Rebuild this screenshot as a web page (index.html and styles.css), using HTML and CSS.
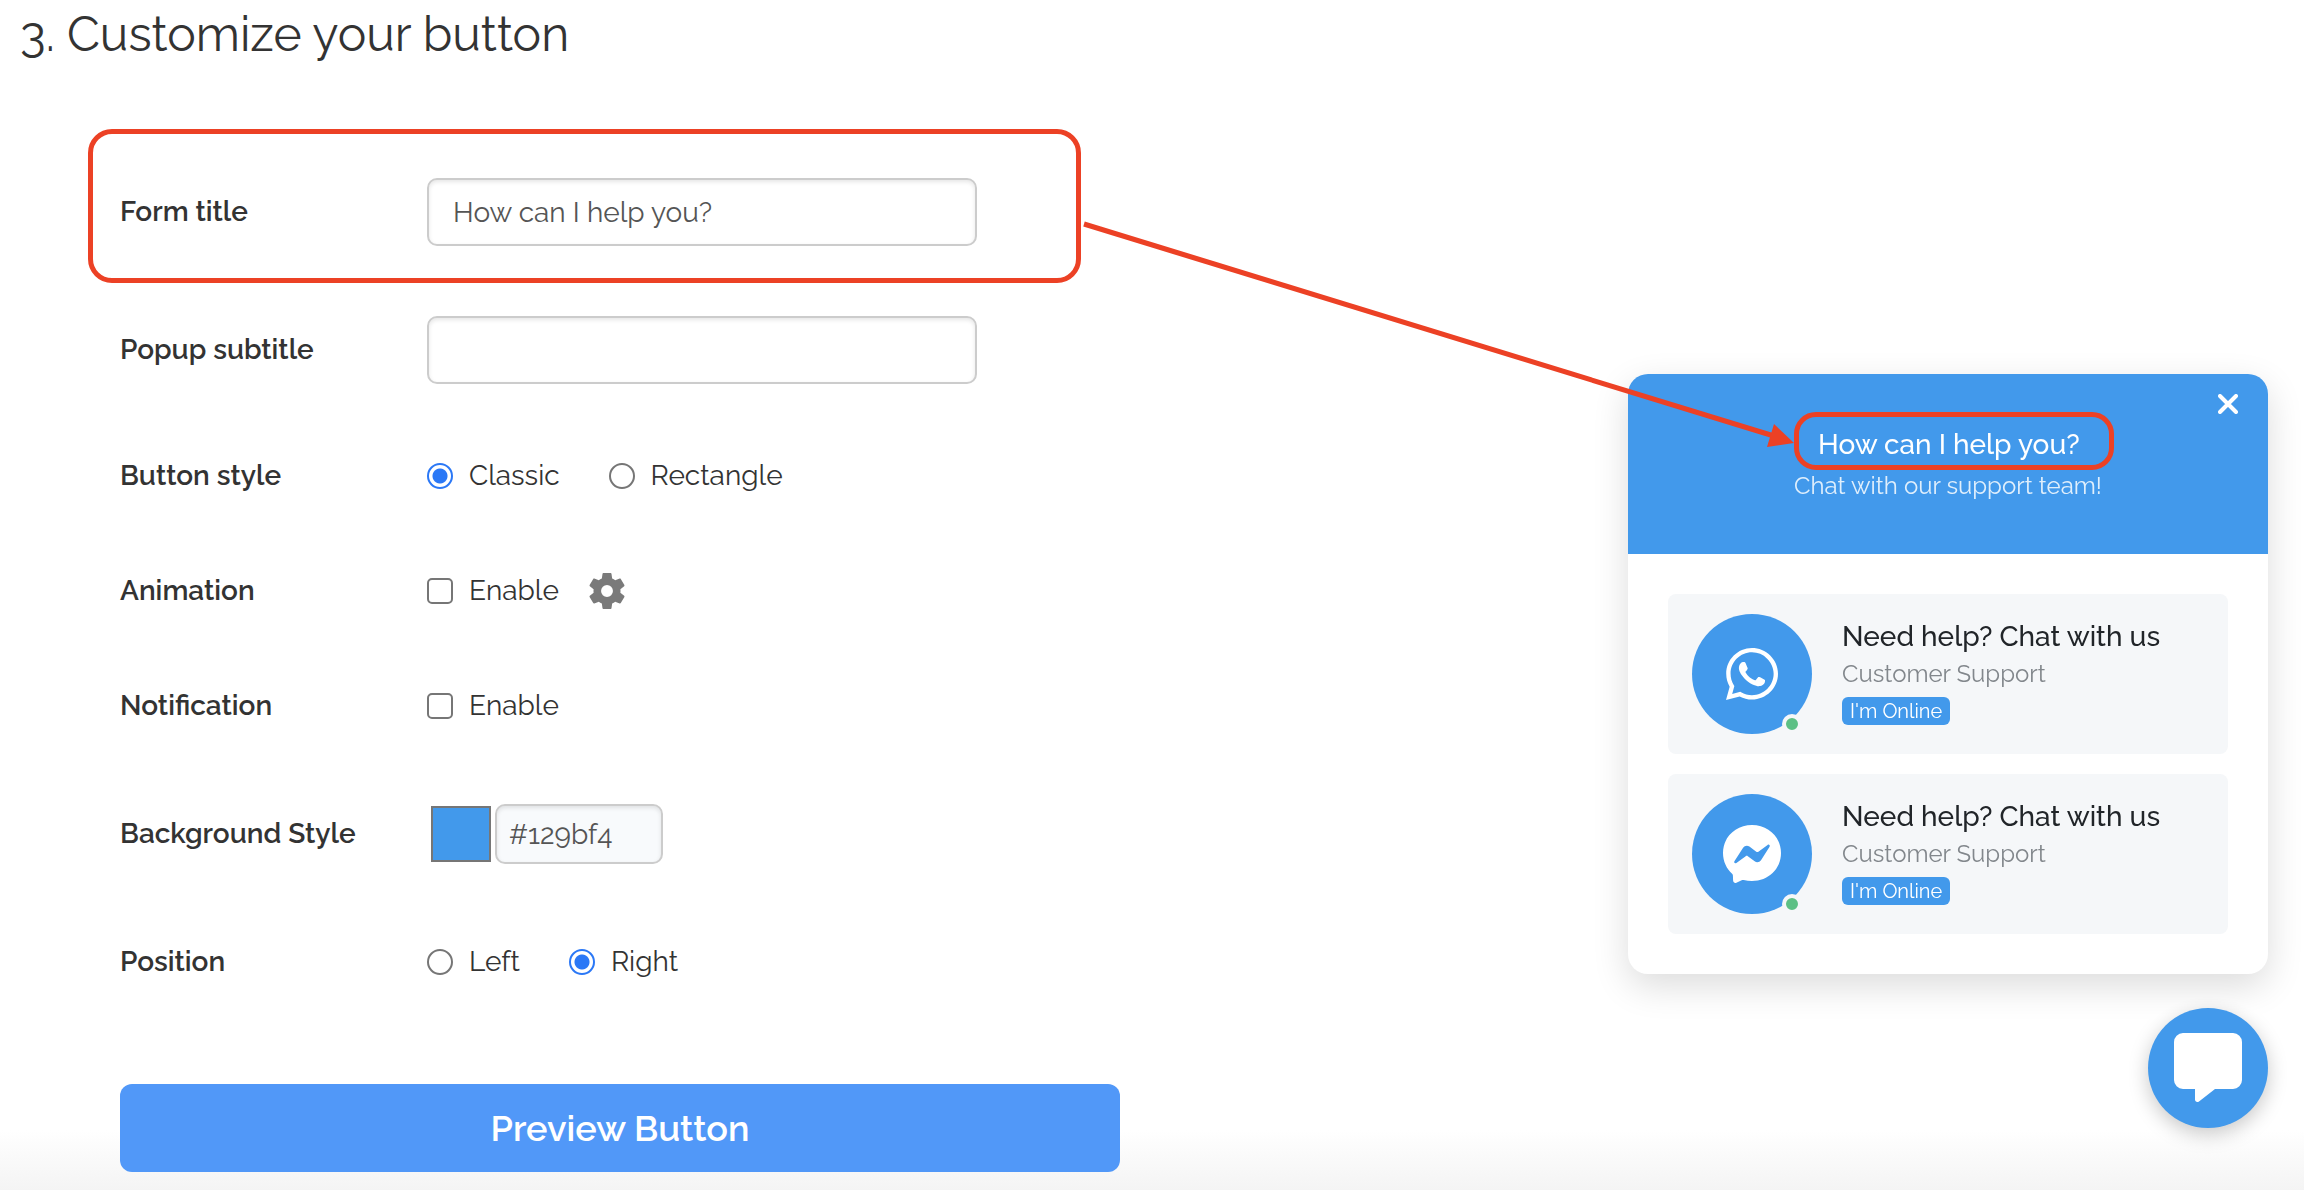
FILE: index.html
```html
<!DOCTYPE html>
<html lang="en">
<head>
  <meta charset="UTF-8">
  <meta name="viewport" content="width=device-width, initial-scale=1">
  <title>Customize your button</title>
  <link rel="stylesheet" href="styles.css">
</head>
<body>

  <h1>3. Customize your button</h1>

  <form class="settings">
    <div class="row highlight">
      <label class="name" for="form-title">Form title</label>
      <input type="text" class="text-input" id="form-title" value="How can I help you?">
    </div>
    <div class="row">
      <label class="name" for="subtitle">Popup subtitle</label>
      <input type="text" class="text-input" id="subtitle">
    </div>

    <div class="options">
      <div class="row" role="radiogroup" aria-labelledby="style-name">
        <span class="name" id="style-name">Button style</span>
        <div class="choices">
          <label class="choice"><input type="radio" name="style" checked> Classic</label>
          <label class="choice"><input type="radio" name="style"> Rectangle</label>
        </div>
      </div>
      <div class="row">
        <span class="name">Animation</span>
        <div class="choices with-icon">
          <label class="choice"><input type="checkbox" name="animation"> Enable</label>
          <button type="button" class="gear" aria-label="Animation settings">
            <svg viewBox="2 2 20 20"><path fill="#7a7a7a" d="M19.43 12.98c.04-.32.07-.64.07-.98s-.03-.66-.07-.98l2.11-1.65c.19-.15.24-.42.12-.64l-2-3.46c-.12-.22-.39-.3-.61-.22l-2.49 1c-.52-.4-1.08-.73-1.69-.98l-.38-2.65C14.46 2.18 14.25 2 14 2h-4c-.25 0-.46.18-.49.42l-.38 2.65c-.61.25-1.17.59-1.69.98l-2.49-1c-.23-.09-.49 0-.61.22l-2 3.46c-.13.22-.07.49.12.64l2.11 1.65c-.04.32-.07.65-.07.98s.03.66.07.98l-2.11 1.65c-.19.15-.24.42-.12.64l2 3.46c.12.22.39.3.61.22l2.49-1c.52.4 1.08.73 1.69.98l.38 2.65c.03.24.24.42.49.42h4c.25 0 .46-.18.49-.42l.38-2.65c.61-.25 1.17-.59 1.69-.98l2.49 1c.23.09.49 0 .61-.22l2-3.46c.12-.22.07-.49-.12-.64l-2.11-1.65zM12 15.3a3.3 3.3 0 1 1 0-6.6 3.3 3.3 0 0 1 0 6.6z"/></svg>
          </button>
        </div>
      </div>
      <div class="row">
        <span class="name">Notification</span>
        <label class="choice"><input type="checkbox" name="notification"> Enable</label>
      </div>
      <div class="row">
        <label class="name" for="hex">Background Style</label>
        <div class="colors">
          <input type="color" class="swatch" value="#4299eb" aria-label="Pick a color">
          <input type="text" class="text-input hex" id="hex" value="#129bf4">
        </div>
      </div>
      <div class="row" role="radiogroup" aria-labelledby="position-name">
        <span class="name" id="position-name">Position</span>
        <div class="choices">
          <label class="choice"><input type="radio" name="position"> Left</label>
          <label class="choice"><input type="radio" name="position" checked> Right</label>
        </div>
      </div>
    </div>

    <button type="button" class="preview">Preview Button</button>
  </form>

  <!-- chat widget -->
  <div class="widget">
    <section class="popup">
      <header class="popup-head">
        <button type="button" class="close" aria-label="Close">
          <svg viewBox="0 0 20 20"><path d="M2 2l16 16M18 2L2 18" stroke="#fff" stroke-width="4" stroke-linecap="round"/></svg>
        </button>
        <h2>How can I help you?</h2>
        <p>Chat with our support team!</p>
      </header>
      <div class="agents">
        <a class="agent" href="#">
          <span class="avatar">
            <svg width="52" height="52" viewBox="0 0 448 448"><path fill="#fff" d="M380.900 65.100C339 23.100 283.200 0 223.900 0 101.500 0 1.900 99.600 1.900 222c0 39.100 10.200 77.300 29.600 111L0 448l117.700-30.900c32.400 17.700 68.900 27 106.100 27h.1c122.300 0 224.100-99.600 224.100-222 0-59.300-25.200-115-67.100-157zM223.900 406.700c-33.200 0-65.700-8.900-94-25.700l-6.700-4-69.800 18.300L72 327.200l-4.400-7C49.100 290.800 39.400 256.900 39.400 222c0-101.700 82.800-184.500 184.600-184.500 49.300 0 95.600 19.200 130.400 54.100 34.800 34.900 56.200 81.200 56.100 130.500 0 101.800-84.900 184.600-186.600 184.600zm101.200-138.200c-5.500-2.800-32.800-16.200-37.900-18-5.100-1.900-8.800-2.800-12.500 2.800-3.700 5.600-14.300 18-17.600 21.800-3.200 3.700-6.500 4.200-12 1.400-32.600-16.300-54-29.100-75.500-66-5.700-9.800 5.700-9.100 16.300-30.300 1.800-3.700.9-6.900-.5-9.700-1.400-2.800-12.500-30.100-17.100-41.200-4.500-10.800-9.100-9.300-12.500-9.500-3.200-.2-6.900-.2-10.600-.2-3.700 0-9.700 1.400-14.800 6.900-5.100 5.600-19.400 19-19.400 46.300 0 27.300 19.900 53.700 22.600 57.400 2.800 3.700 39.100 59.700 94.800 83.800 35.200 15.200 49 16.500 66.600 13.900 10.700-1.600 32.800-13.400 37.400-26.400 4.600-13 4.600-24.100 3.200-26.400-1.300-2.500-5-3.900-10.500-6.600z"/></svg>
            <i class="status"></i>
          </span>
          <span class="info">
            <b>Need help? Chat with us</b>
            <small>Customer Support</small>
            <em>I'm Online</em>
          </span>
        </a>
        <a class="agent" href="#">
          <span class="avatar">
            <svg width="58" height="58" viewBox="0 0 58 58"><path fill="#fff" d="M29 0C12.700 0 0 12 0 28c0 8.400 3.500 15.700 9.100 20.700.5.400.8 1 .8 1.700l.2 5.200c.1 1.700 1.800 2.800 3.300 2.100l5.800-2.600c.5-.2 1-.2 1.500-.1 2.600.7 5.400 1.100 8.300 1.100 16.300 0 29-12 29-28S45.300 0 29 0z"/><path fill="#4299eb" d="M11.400 36.300l8.700-13.600c1.400-2.100 4.300-2.700 6.300-1.100l6.900 5.100c.6.500 1.500.5 2.100 0l9.200-6.800c1.200-.9 2.800.5 2 1.800L38 35.200c-1.400 2.100-4.300 2.700-6.300 1.100l-6.900-5.100c-.6-.5-1.500-.5-2.100 0L13.400 38c-1.200.9-2.800-.4-2-1.700z"/></svg>
            <i class="status"></i>
          </span>
          <span class="info">
            <b>Need help? Chat with us</b>
            <small>Customer Support</small>
            <em>I'm Online</em>
          </span>
        </a>
      </div>
    </section>

    <button type="button" class="chat-btn" aria-label="Open chat">
      <svg width="68" height="70" viewBox="0 0 68 70"><path fill="#fff" d="M9 0h50a9 9 0 0 1 9 9v38a9 9 0 0 1-9 9H41L25 68.500c-2 1.200-4 .2-4-2V56H9a9 9 0 0 1-9-9V9a9 9 0 0 1 9-9z"/></svg>
    </button>

    <!-- arrow from the form field to the popup title -->
    <svg class="arrow" width="710" height="226" viewBox="0 0 710 226">
      <path d="M0 4L690 216" stroke="#ec4125" stroke-width="5"/>
      <path d="M710 223L690 204L683 227Z" fill="#ec4125"/>
    </svg>
  </div>

</body>
</html>
```
FILE: styles.css
```css
* {
  box-sizing: border-box;
}
body {
  margin: 0;
  min-height: 100vh;
  font-family: Raleway, Lato, sans-serif;
  font-size: 28px;
  line-height: 34px;
  color: #333;
  background: linear-gradient(to top, #f4f4f4, #fff 60px);
}
h1 {
  margin: 0;
  padding: 3px 20px 0;
  font-size: 48px;
  font-weight: 400;
  line-height: 62px;
}
button, input {
  font: inherit;
  color: inherit;
}
button {
  border: 0;
  padding: 0;
  background: none;
  cursor: pointer;
}
svg {
  display: block;
  fill: none;
}

/* form */
.settings {
  width: 1000px;
  max-width: calc(100% - 120px);
  margin: 64px 0 0 120px;
}
.row {
  display: grid;
  grid-template-columns: 307px 1fr;
  align-items: center;
}
.name {
  font-weight: 600;
}
.highlight {
  margin: 0 39px 33px -32px;
  padding: 44px 27px 32px;
  border: 5px solid #ec4125;
  border-radius: 24px;
}
.text-input {
  width: 550px;
  height: 68px;
  padding: 0 24px;
  border: 2px solid #ccc;
  border-radius: 10px;
  background: #fff;
  box-shadow: inset 0 2px 4px rgba(0, 0, 0, 0.1);
  color: #555;
}
.options {
  display: flex;
  flex-direction: column;
  gap: 81px;
  margin: 75px 0 105px;
}
.choices {
  display: flex;
  gap: 49px;
}
.with-icon {
  gap: 30px;
}
.choice {
  display: flex;
  align-items: center;
  gap: 16px;
}
.choice input {
  appearance: none;
  width: 26px;
  height: 26px;
  margin: 0;
  border: 2px solid #767676;
  border-radius: 5px;
  background: #fff;
}
.choice input[type="radio"] {
  border-radius: 50%;
}
.choice input[type="radio"]:checked {
  border-color: #2b78f6;
  background: radial-gradient(circle, #2b78f6 7px, #fff 8px);
}
.gear {
  width: 36px;
  height: 36px;
  margin: -1px 0;
}
.colors {
  display: flex;
  align-items: center;
  gap: 4px;
  padding-left: 4px;
}
.swatch {
  appearance: none;
  width: 60px;
  height: 56px;
  padding: 0;
  border: 2px solid #767676;
  background: none;
}
.swatch::-webkit-color-swatch-wrapper {
  padding: 0;
}
.swatch::-webkit-color-swatch {
  border: 0;
}
.hex {
  width: 168px;
  height: 60px;
  padding: 0 12px;
  background: #f8fafc;
}
.preview {
  width: 100%;
  height: 88px;
  border-radius: 12px;
  background: #5198f8;
  color: #fff;
  font-size: 36px;
  font-weight: 600;
}

/* chat widget */
.widget {
  position: fixed;
  right: 36px;
  bottom: 62px;
  display: flex;
  flex-direction: column;
  align-items: flex-end;
  gap: 34px;
}
.popup {
  width: 640px;
  border-radius: 20px;
  background: #fff;
  box-shadow: 0 12px 36px rgba(0, 0, 0, 0.14);
}
.popup-head {
  display: flex;
  flex-direction: column;
  align-items: center;
  height: 180px;
  padding-top: 38px;
  border-radius: 20px 20px 0 0;
  background: #4299eb;
  color: #fff;
}
.popup-head h2 {
  width: 320px;
  margin: 0 0 0 12px;
  padding: 11px 19px 3px;
  border: 5px solid #ec4125;
  border-radius: 22px;
  font-size: 28px;
  font-weight: 500;
  line-height: 34px;
}
.popup-head p {
  margin: 0;
  font-size: 24px;
  line-height: 32px;
  color: #e0effc;
}
.close {
  position: absolute;
  top: 20px;
  right: 30px;
  width: 20px;
  height: 20px;
}
.agents {
  display: flex;
  flex-direction: column;
  gap: 20px;
  padding: 40px;
}
.agent {
  display: flex;
  align-items: center;
  gap: 30px;
  padding: 20px 24px;
  border-radius: 8px;
  background: #f5f7f9;
  color: #212529;
  text-decoration: none;
}
.avatar {
  position: relative;
  display: flex;
  align-items: center;
  justify-content: center;
  width: 120px;
  height: 120px;
  border-radius: 50%;
  background: #4299eb;
}
.status {
  position: absolute;
  right: 10px;
  bottom: 0;
  width: 20px;
  height: 20px;
  border: 4px solid #f5f7f9;
  border-radius: 50%;
  background: #5dc085;
}
.info {
  display: flex;
  flex-direction: column;
  align-items: flex-start;
  padding-bottom: 6px;
}
.info b {
  font-weight: 500;
  line-height: 40px;
}
.info small {
  font-size: 24px;
  line-height: 34px;
  color: #82878c;
}
.info em {
  margin-top: 6px;
  padding: 0 8px;
  border-radius: 6px;
  background: #4299eb;
  color: #fff;
  font-size: 20px;
  font-style: normal;
  line-height: 28px;
}
.chat-btn {
  display: flex;
  align-items: center;
  justify-content: center;
  width: 120px;
  height: 120px;
  border-radius: 50%;
  background: #4299eb;
  box-shadow: 0 6px 20px rgba(0, 0, 0, 0.22);
}
.arrow {
  position: absolute;
  right: 474px;
  bottom: 682px;
  overflow: visible;
  pointer-events: none;
}
```
